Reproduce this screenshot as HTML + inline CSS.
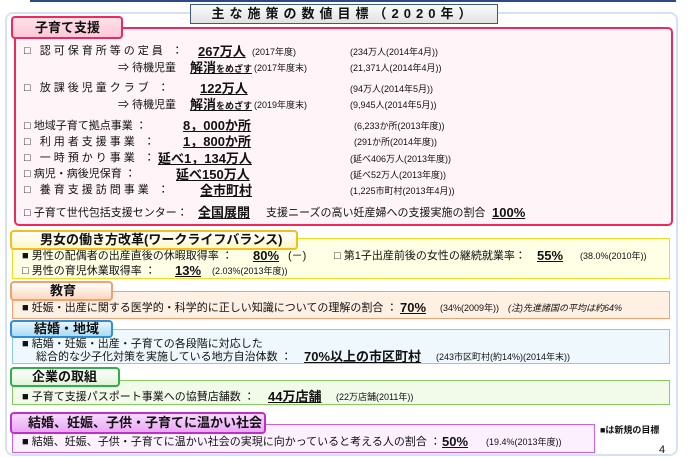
<!DOCTYPE html><html><head><meta charset="utf-8"><style>
*{margin:0;padding:0;box-sizing:border-box}
body{width:700px;height:458px;background:#fff;position:relative;overflow:hidden;font-family:"Liberation Sans","Noto Sans CJK JP",sans-serif;color:#111}
.a{position:absolute;white-space:nowrap}
.t{font-size:11px;line-height:14px}
.s{font-size:9px;line-height:14px}
.b{font-size:13px;font-weight:bold;text-decoration:underline;line-height:14px}
.lab{position:absolute;font-weight:bold;font-size:13px;border-radius:4px;border:2px solid;padding-left:0}
.box{position:absolute;border:1.5px solid}
.sp{letter-spacing:3px}
</style></head><body>
<div class="a" style="left:30px;top:0;width:646px;height:2px;background:#2b4a86"></div>
<div class="a" style="left:5px;top:12px;width:673px;height:444px;border:2px solid #d6e2f0;border-radius:8px"></div>
<div class="a" style="left:190px;top:4px;width:308px;height:20px;border:1px solid #3b5a8a;background:linear-gradient(#fafafa,#e2e2e2);font-size:13px;font-weight:bold;text-align:center;line-height:18px;letter-spacing:5px">主な施策の数値目標（2020年）</div>

<div class="box" style="left:14px;top:27px;width:659px;height:199px;border-color:#ec2a5e;border-width:2px;border-radius:5px;background:#fff4f8"></div>
<div class="lab" style="left:11px;top:16px;width:112px;height:23px;border-color:#ec2a5e;background:linear-gradient(#ffe0ea,#ffc8d8);line-height:19px;padding-left:22px">子育て支援</div>

<div class="a t" style="left:24px;top:44px"><span class="sp">□ 認可保育所等の定員 ：</span></div>
<div class="a b" style="left:198px;top:45px">267万人</div><div class="a s" style="left:252px;top:45px">(2017年度)</div>
<div class="a s" style="left:350px;top:45px">(234万人(2014年4月))</div>
<div class="a t" style="left:118px;top:61px">⇒ 待機児童</div><div class="a b" style="left:190px;top:61px">解消<span style="font-size:9px">をめざす</span></div><div class="a s" style="left:254px;top:61px">(2017年度末)</div>
<div class="a s" style="left:350px;top:61px">(21,371人(2014年4月))</div>

<div class="a t" style="left:24px;top:81px"><span class="sp">□ 放課後児童クラブ ：</span></div>
<div class="a b" style="left:200px;top:82px">122万人</div>
<div class="a s" style="left:350px;top:82px">(94万人(2014年5月))</div>
<div class="a t" style="left:118px;top:98px">⇒ 待機児童</div><div class="a b" style="left:190px;top:98px">解消<span style="font-size:9px">をめざす</span></div><div class="a s" style="left:254px;top:98px">(2019年度末)</div>
<div class="a s" style="left:350px;top:98px">(9,945人(2014年5月))</div>

<div class="a t" style="left:24px;top:119px">□ 地域子育て拠点事業 ：</div><div class="a b" style="left:183px;top:119px">8，000か所</div><div class="a s" style="left:354px;top:119px">(6,233か所(2013年度))</div>
<div class="a t" style="left:24px;top:135px"><span class="sp">□ 利用者支援事業 ：</span></div><div class="a b" style="left:183px;top:135px">1，800か所</div><div class="a s" style="left:354px;top:135px">(291か所(2014年度))</div>
<div class="a t" style="left:24px;top:151px"><span class="sp">□ 一時預かり事業 ：</span></div><div class="a b" style="left:158px;top:152px">延べ1，134万人</div><div class="a s" style="left:350px;top:152px">(延べ406万人(2013年度))</div>
<div class="a t" style="left:24px;top:167px">□ 病児・病後児保育 ：</div><div class="a b" style="left:176px;top:168px">延べ150万人</div><div class="a s" style="left:350px;top:168px">(延べ52万人(2013年度))</div>
<div class="a t" style="left:24px;top:183px"><span class="sp">□ 養育支援訪問事業 ：</span></div><div class="a b" style="left:200px;top:184px">全市町村</div><div class="a s" style="left:350px;top:184px">(1,225市町村(2013年4月))</div>
<div class="a t" style="left:24px;top:206px">□ 子育て世代包括支援センター：</div><div class="a b" style="left:198px;top:206px">全国展開</div><div class="a t" style="left:266px;top:206px">支援ニーズの高い妊産婦への支援実施の割合</div><div class="a b" style="left:492px;top:206px">100%</div>

<div class="box" style="left:12px;top:238px;width:658px;height:41px;border-color:#f2dc20;background:#ffffe6"></div>
<div class="lab" style="left:10px;top:230px;width:288px;height:20px;border-color:#f3c01a;background:linear-gradient(#fff,#fff6c8);line-height:16px;padding-left:28px">男女の働き方改革(ワークライフバランス)</div>
<div class="a t" style="left:22px;top:249px">■ 男性の配偶者の出産直後の休暇取得率 ：</div><div class="a b" style="left:253px;top:249px">80%</div><div class="a t" style="left:288px;top:249px">(－)</div>
<div class="a t" style="left:334px;top:249px">□ 第1子出産前後の女性の継続就業率：</div><div class="a b" style="left:537px;top:249px">55%</div><div class="a s" style="left:580px;top:249px">(38.0%(2010年))</div>
<div class="a t" style="left:22px;top:264px">□ 男性の育児休業取得率 ：</div><div class="a b" style="left:175px;top:264px">13%</div><div class="a s" style="left:212px;top:264px">(2.03%(2013年度))</div>

<div class="box" style="left:12px;top:291px;width:658px;height:28px;border-color:#f4a070;background:#fff0e4"></div>
<div class="lab" style="left:10px;top:281px;width:103px;height:20px;border-color:#f4a070;background:linear-gradient(#fff,#fcd8bc);line-height:16px;padding-left:38px">教育</div>
<div class="a t" style="left:22px;top:301px">■ 妊娠・出産に関する医学的・科学的に正しい知識についての理解の割合 ：</div><div class="a b" style="left:400px;top:301px">70%</div><div class="a s" style="left:440px;top:301px">(34%(2009年))　<i>(注)先進諸国の平均は約64%</i></div>

<div class="box" style="left:12px;top:329px;width:658px;height:35px;border-color:#8cc8e8;background:#eef8fd"></div>
<div class="lab" style="left:10px;top:320px;width:103px;height:18px;border-color:#2f8ed6;background:linear-gradient(#e8f6ff,#a8dcf6);line-height:14px;padding-left:22px">結婚・地域</div>
<div class="a t" style="left:22px;top:337px">■ 結婚・妊娠・出産・子育ての各段階に対応した</div>
<div class="a t" style="left:36px;top:350px">総合的な少子化対策を実施している地方自治体数 ：</div><div class="a b" style="left:304px;top:350px">70%以上の市区町村</div><div class="a s" style="left:436px;top:350px">(243市区町村(約14%)(2014年末))</div>

<div class="box" style="left:12px;top:380px;width:658px;height:25px;border-color:#88cc60;background:#f2faea"></div>
<div class="lab" style="left:10px;top:367px;width:110px;height:20px;border-color:#2fae4a;background:linear-gradient(#fff,#e0f4d8);line-height:16px;padding-left:20px">企業の取組</div>
<div class="a t" style="left:22px;top:390px">■ 子育て支援パスポート事業への協賛店舗数 ：</div><div class="a b" style="left:268px;top:390px">44万店舗</div><div class="a s" style="left:336px;top:390px">(22万店舗(2011年))</div>

<div class="box" style="left:12px;top:424px;width:583px;height:29px;border-color:#d060e0;background:#fcf0ff"></div>
<div class="lab" style="left:10px;top:412px;width:256px;height:22px;border-color:#c030c8;background:linear-gradient(#f8d8ff,#eaa8f4);line-height:18px;padding-left:16px">結婚、妊娠、子供・子育てに温かい社会</div>
<div class="a t" style="left:22px;top:435px">■ 結婚、妊娠、子供・子育てに温かい社会の実現に向かっていると考える人の割合 ：</div><div class="a b" style="left:442px;top:435px">50%</div><div class="a s" style="left:486px;top:435px">(19.4%(2013年度))</div>
<div class="a" style="left:600px;top:423px;font-size:9px;font-weight:bold">■は新規の目標</div>
<div class="a" style="left:659px;top:444px;font-size:11px">4</div>
</body></html>
